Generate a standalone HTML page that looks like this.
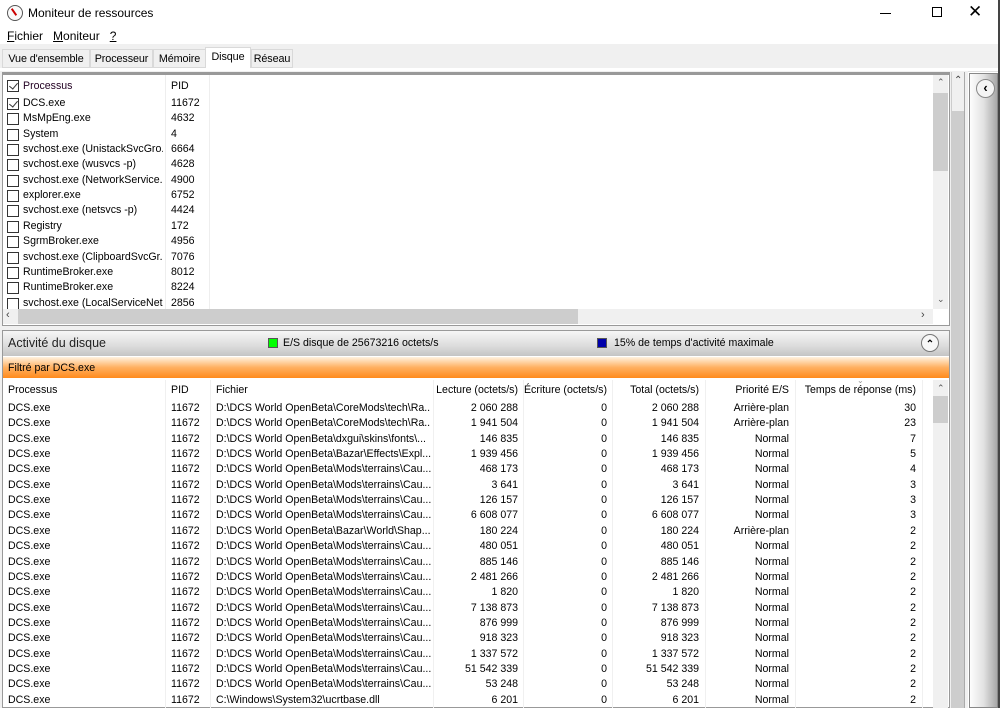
<!DOCTYPE html>
<html><head><meta charset="utf-8"><style>
*{margin:0;padding:0;box-sizing:border-box}
body{width:1000px;height:708px;overflow:hidden;background:#fff;font-family:"Liberation Sans",sans-serif;font-size:10.6px;color:#000;position:relative}
.a{position:absolute;white-space:nowrap}
.cl{overflow:hidden}
.cb{position:absolute;width:12px;height:12px;border:1px solid #333;background:#fff}
.cb.c::after{content:"";position:absolute;left:3px;top:0px;width:4px;height:7px;border:solid #333;border-width:0 1.3px 1.3px 0;transform:rotate(40deg)}
.r{text-align:right}
.tab{position:absolute;top:49px;height:19px;border:1px solid #d9d9d9;padding-top:3px;text-align:center;font-size:10.8px;letter-spacing:-0.1px}
</style></head><body>
<div class="a" style="left:7px;top:5px;width:16px;height:16px;border:1.5px solid #555;border-radius:50%;background:#fafafa"></div>
<div class="a" style="left:13px;top:8px;width:2px;height:8px;background:#c00;transform:rotate(-35deg)"></div>
<div class="a" style="left:28px;top:6px;font-size:12px">Moniteur de ressources</div>
<div class="a" style="left:880px;top:13px;width:11px;height:1px;background:#000"></div>
<div class="a" style="left:932px;top:7px;width:10px;height:10px;border:1px solid #000"></div>
<div class="a" style="left:968px;top:2px;font-size:17px;font-weight:300">✕</div>
<div class="a" style="left:998px;top:0;width:2px;height:708px;background:#444"></div>
<div class="a" style="left:7px;top:29px;font-size:12px"><u>F</u>ichier &nbsp;&nbsp;<u>M</u>oniteur &nbsp;&nbsp;<u>?</u></div>
<div class="a" style="left:0;top:44px;width:998px;height:24px;background:#f0f0f0"></div>
<div class="tab" style="left:2px;width:88px">Vue d'ensemble</div>
<div class="tab" style="left:90px;width:63px">Processeur</div>
<div class="tab" style="left:153px;width:53px">Mémoire</div>
<div class="tab" style="left:205px;top:47px;width:46px;height:22px;border-bottom:none;background:#fff;padding-top:3px">Disque</div>
<div class="tab" style="left:251px;width:42px">Réseau</div>
<div class="a" style="left:0;top:68px;width:998px;height:4px;background:#fff;border-bottom:1px solid #e0e0e0"></div>
<div class="a" style="left:0;top:71px;width:968px;height:637px;background:#f0f0f0"></div>
<div class="a" style="left:2px;top:72px;width:948px;height:254px;border:1px solid #999;border-top:3px solid #999;background:#fff"></div>
<div class="a" style="left:165px;top:75px;width:1px;height:234px;background:#eee"></div>
<div class="a" style="left:209px;top:75px;width:1px;height:234px;background:#eee"></div>
<div class="cb c" style="left:7px;top:80px"></div>
<div class="a" style="left:23px;top:80px;color:#202">Processus</div>
<div class="a" style="left:171px;top:80px">PID</div>
<div id="top"></div>
<div class="a" style="left:933px;top:75px;width:15px;height:234px;background:#f0f0f0"></div>
<div class="a" style="left:933px;top:93px;width:15px;height:78px;background:#cdcdcd"></div>
<div class="a" style="left:937px;top:77px;font-size:9px;color:#555">⌃</div>
<div class="a" style="left:937px;top:294px;font-size:9px;color:#555">⌄</div>
<div class="a" style="left:3px;top:309px;width:930px;height:15px;background:#f0f0f0"></div>
<div class="a" style="left:18px;top:309px;width:560px;height:15px;background:#cdcdcd"></div>
<div class="a" style="left:6px;top:309px;font-size:11px;color:#444">‹</div>
<div class="a" style="left:921px;top:309px;font-size:11px;color:#444">›</div>
<div class="a" style="left:951px;top:72px;width:14px;height:636px;background:#f0f0f0;border-left:1px solid #ccc;border-right:1px solid #aaa"></div>
<div class="a" style="left:952px;top:111px;width:12px;height:597px;background:#cdcdcd"></div>
<div class="a" style="left:954px;top:75px;font-size:10px;color:#444">⌃</div>
<div class="a" style="left:969px;top:73px;width:29px;height:635px;border:1px solid #888;background:linear-gradient(90deg,#fdfdfd,#e2e2e2 50%,#a8a8a8)"></div>
<div class="a" style="left:976px;top:79px;width:19px;height:19px;border:1px solid #888;border-radius:50%;background:#f4f4f4;text-align:center;font-size:13px;font-weight:bold;line-height:16px">‹</div>
<div class="a" style="left:2px;top:330px;width:948px;height:378px;border:1px solid #999;background:#fff"></div>
<div class="a" style="left:3px;top:331px;width:946px;height:25px;background:linear-gradient(#f6f6f6,#dcdcdc 60%,#c4c4c4)"></div>
<div class="a" style="left:8px;top:336px;font-size:12.5px;color:#222">Activité du disque</div>
<div class="a" style="left:268px;top:338px;width:10px;height:10px;background:#0f0;border:1px solid #555"></div>
<div class="a" style="left:283px;top:337px">E/S disque de 25673216 octets/s</div>
<div class="a" style="left:597px;top:338px;width:10px;height:10px;background:#00a;border:1px solid #555"></div>
<div class="a" style="left:614px;top:337px">15% de temps d'activité maximale</div>
<div class="a" style="left:921px;top:334px;width:18px;height:18px;border:1px solid #777;border-radius:50%;background:#f7f7f7;text-align:center;font-size:10px;font-weight:bold;line-height:20px">⌃</div>
<div class="a" style="left:3px;top:357px;width:946px;height:21px;background:linear-gradient(#fff2e0,#ffb060 50%,#ff8a1c)"></div>
<div class="a" style="left:8px;top:362px">Filtré par DCS.exe</div>
<div id="bh"></div>
<div id="bot"></div>
<div class="a" style="left:933px;top:380px;width:15px;height:328px;background:#f0f0f0"></div>
<div class="a" style="left:933px;top:396px;width:15px;height:27px;background:#cdcdcd"></div>
<div class="a" style="left:937px;top:383px;font-size:9px;color:#555">⌃</div>
<script>
var tp=[["DCS.exe","11672",1],["MsMpEng.exe","4632"],["System","4"],["svchost.exe (UnistackSvcGro...","6664"],["svchost.exe (wusvcs -p)","4628"],["svchost.exe (NetworkService...","4900"],["explorer.exe","6752"],["svchost.exe (netsvcs -p)","4424"],["Registry","172"],["SgrmBroker.exe","4956"],["svchost.exe (ClipboardSvcGr...","7076"],["RuntimeBroker.exe","8012"],["RuntimeBroker.exe","8224"],["svchost.exe (LocalServiceNet...","2856"]];
var h="";tp.forEach(function(r,i){var y=98+i*15.35;h+='<div class="cb'+(r[2]?' c':'')+'" style="left:7px;top:'+(y)+'px"></div><div class="a cl" style="left:23px;width:140px;top:'+(y-1)+'px">'+r[0]+'</div><div class="a" style="left:171px;top:'+(y-1)+'px">'+r[1]+'</div>';});
document.getElementById("top").outerHTML=h;
var cols=[165,210,433,523,612,705,795,922];
h='';cols.forEach(function(x){h+='<div class="a" style="left:'+x+'px;top:380px;width:1px;height:328px;background:#f0f0f0"></div>';});
h+='<div class="a" style="left:8px;top:384px">Processus</div><div class="a" style="left:171px;top:384px">PID</div><div class="a" style="left:216px;top:384px">Fichier</div>';
var hd=[["Lecture (octets/s)",518],["Écriture (octets/s)",607],["Total (octets/s)",699],["Priorité E/S",789],["Temps de réponse (ms)",916]];
hd.forEach(function(c){h+='<div class="a r" style="right:'+(1000-c[1])+'px;top:384px">'+c[0]+'</div>';});
h+='<div class="a" style="left:857px;top:376px;font-size:8px;color:#999">⌄</div>';
document.getElementById("bh").outerHTML=h;
var D="D:\\DCS World OpenBeta\\";
var M=D+"Mods\\terrains\\Cau...";
var rows=[[D+"CoreMods\\tech\\Ra...","2 060 288","Arrière-plan","30"],[D+"CoreMods\\tech\\Ra...","1 941 504","Arrière-plan","23"],[D+"dxgui\\skins\\fonts\\...","146 835","Normal","7"],[D+"Bazar\\Effects\\Expl...","1 939 456","Normal","5"],[M,"468 173","Normal","4"],[M,"3 641","Normal","3"],[M,"126 157","Normal","3"],[M,"6 608 077","Normal","3"],[D+"Bazar\\World\\Shap...","180 224","Arrière-plan","2"],[M,"480 051","Normal","2"],[M,"885 146","Normal","2"],[M,"2 481 266","Normal","2"],[M,"1 820","Normal","2"],[M,"7 138 873","Normal","2"],[M,"876 999","Normal","2"],[M,"918 323","Normal","2"],[M,"1 337 572","Normal","2"],[M,"51 542 339","Normal","2"],[M,"53 248","Normal","2"],["C:\\Windows\\System32\\ucrtbase.dll","6 201","Normal","2"]];
h='';rows.forEach(function(r,i){var y=402+i*15.35;
h+='<div class="a" style="left:8px;top:'+y+'px">DCS.exe</div><div class="a" style="left:171px;top:'+y+'px">11672</div><div class="a cl" style="left:216px;width:215px;top:'+y+'px">'+r[0]+'</div>';
h+='<div class="a r" style="right:482px;top:'+y+'px">'+r[1]+'</div><div class="a r" style="right:393px;top:'+y+'px">0</div><div class="a r" style="right:301px;top:'+y+'px">'+r[1]+'</div><div class="a r" style="right:211px;top:'+y+'px">'+r[2]+'</div><div class="a r" style="right:84px;top:'+y+'px">'+r[3]+'</div>';});
document.getElementById("bot").outerHTML=h;
</script>
</body></html>
